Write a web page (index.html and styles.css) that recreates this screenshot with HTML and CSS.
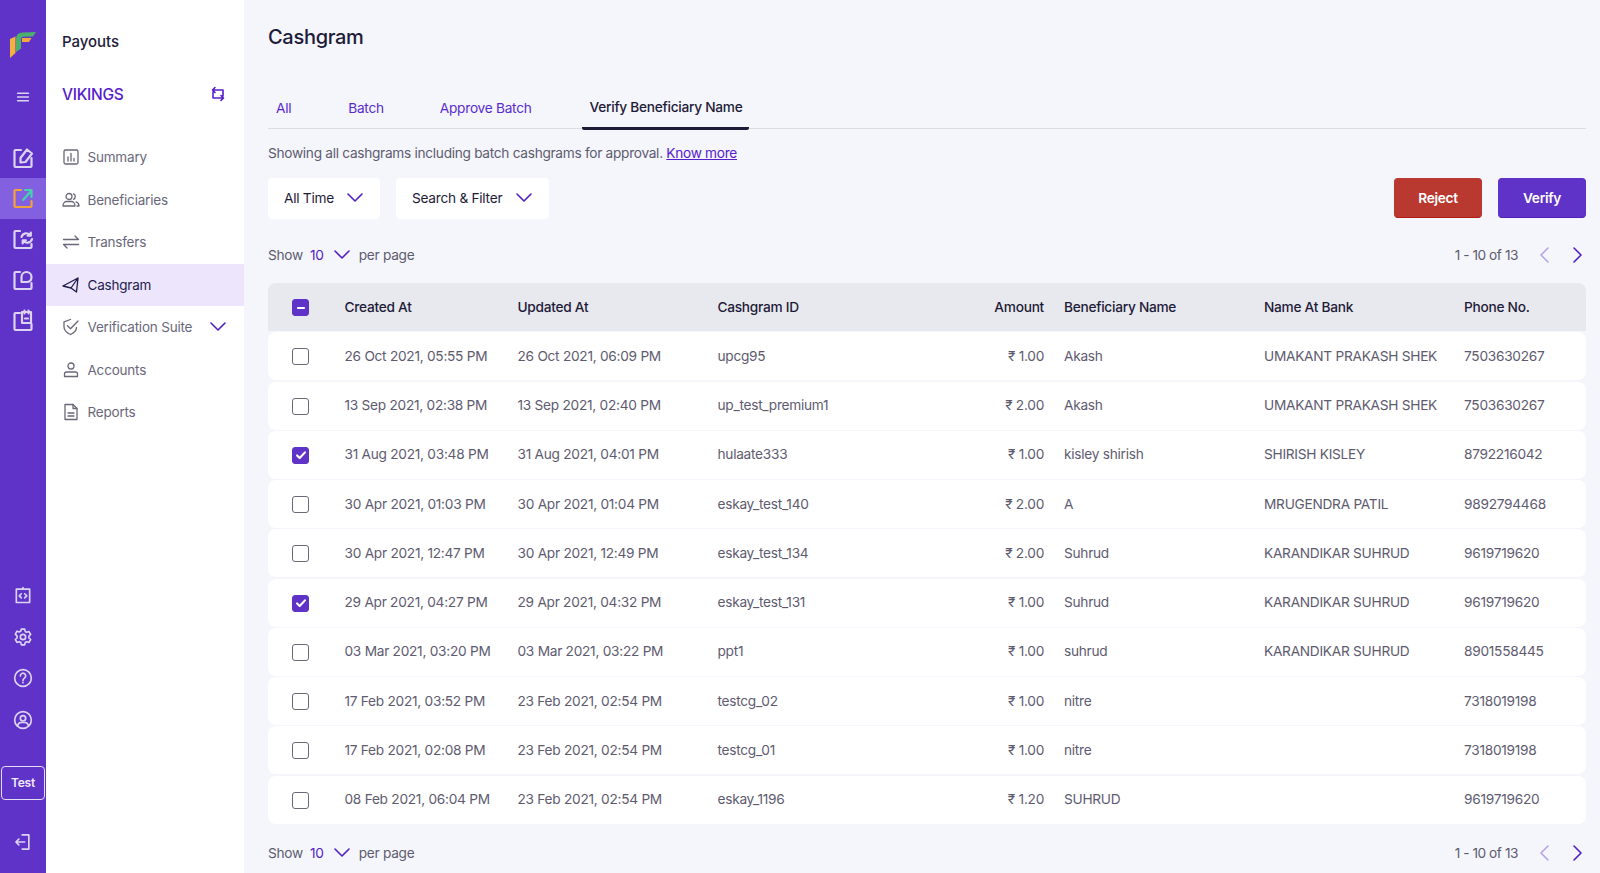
FILE: index.html
```html
<!DOCTYPE html>
<html lang="en">
<head>
<meta charset="utf-8">
<title>Cashgram</title>
<link rel="stylesheet" href="styles.css">
</head>
<body>
<div class="app">
  <nav class="rail">
    <svg class="logo" viewBox="0 0 26 26" width="26" height="26">
      <path d="M0 7L5.500 4.500V21L0 26Z" fill="#f5b13d"/>
      <path d="M6 7Q6 .5 12.500 .5L26 0L23 4.500L13 4.800Q11 5 11 7.500V16.500L6 20Z" fill="#4caf6e"/>
      <path d="M12 6H21.500L19 10H12Z" fill="#f5a63d"/>
    </svg>
    <button class="rail-btn burger" aria-label="Menu">
      <svg viewBox="0 0 24 24" width="20" height="20"><path d="M5.5 7.5h13M5.5 12h13M5.5 16.500h13"/></svg>
    </button>
    <div class="rail-group">
      <a class="rail-btn"><svg viewBox="0 0 24 24" width="26" height="26"><path d="M10 5H4.500a1 1 0 0 0-1 1v15a1 1 0 0 0 1 1h15a1 1 0 0 0 1-1v-8"/><path d="M9.500 13l6.500-8.500 5 4-6.500 8.500-5 .5z"/></svg></a>
      <a class="rail-btn active"><svg viewBox="0 0 24 24" width="26" height="26"><path class="o" d="M10 4H4.500a1 1 0 0 0-1 1v15a1 1 0 0 0 1 1h15a1 1 0 0 0 1-1v-5"/><path class="t" d="M14 4h6.500v7M20 5l-8 9"/></svg></a>
      <a class="rail-btn"><svg viewBox="0 0 24 24" width="26" height="26"><path d="M9 4H4.500a1 1 0 0 0-1 1v15a1 1 0 0 0 1 1h15a1 1 0 0 0 1-1v-3"/><path d="M10.500 10a5 5 0 0 1 9-1.500M21 12a5 5 0 0 1-9 1.500M19.800 5.500v3.200h-3.200M11.700 16.500v-3.200h3.200"/></svg></a>
      <a class="rail-btn"><svg viewBox="0 0 24 24" width="26" height="26"><path d="M9 4H4.500a1 1 0 0 0-1 1v15a1 1 0 0 0 1 1h15a1 1 0 0 0 1-1v-5"/><path d="M10.500 14V9a5 5 0 0 1 10 0c0 3-2 5-5 5z"/></svg></a>
      <a class="rail-btn"><svg viewBox="0 0 24 24" width="26" height="26"><path d="M9 4H4.500a1 1 0 0 0-1 1v15a1 1 0 0 0 1 1h15a1 1 0 0 0 1-1v-5"/><path d="M11 3h9v11h-9zM13.500 1.500v3M17.500 1.500v3"/><path d="M14 9.500h3"/></svg></a>
    </div>
    <div class="rail-bottom">
      <a class="rail-btn"><svg viewBox="0 0 24 24" width="20" height="20"><path d="M4 5h16v16H4zM12 5V3"/><path d="M10 10.500L7.500 13l2.500 2.500M14 10.500l2.500 2.500-2.500 2.500"/></svg></a>
      <a class="rail-btn"><svg viewBox="0 0 24 24" width="20" height="20"><circle cx="12" cy="12" r="3.200"/><path d="M10 2.500h4l.6 2.800 1.900 1.100 2.700-.9 2 3.500-2.100 1.900v2.200l2.100 1.900-2 3.500-2.700-.9-1.900 1.100-.6 2.800h-4l-.6-2.800-1.900-1.100-2.700.9-2-3.500 2.100-1.900v-2.200L2.800 8.500l2-3.500 2.700.9 1.900-1.100z"/></svg></a>
      <a class="rail-btn"><svg viewBox="0 0 24 24" width="20" height="20"><circle cx="12" cy="12" r="10"/><path d="M8.800 9.500a3.200 3.200 0 1 1 4.900 2.700c-1 .7-1.700 1.300-1.700 2.800M12 17.200v.6"/></svg></a>
      <a class="rail-btn"><svg viewBox="0 0 24 24" width="20" height="20"><circle cx="12" cy="12" r="10"/><circle cx="12" cy="10" r="3.200"/><path d="M5.500 19c.5-2.500 2.500-4 4-4h5c1.500 0 3.500 1.500 4 4"/></svg></a>
      <div class="env">Test</div>
      <a class="rail-btn exit"><svg viewBox="0 0 24 24" width="20" height="20"><path d="M11 3.500h8v17h-8"/><path d="M14 12H3.500M7 8.500L3.500 12 7 15.500"/></svg></a>
    </div>
  </nav>

  <aside class="side">
    <h2 class="side-title">Payouts</h2>
    <div class="merchant">
      <span>VIKINGS</span>
      <svg viewBox="0 0 16 16" width="16" height="16"><path d="M5 1.500L2.500 4 5 6.500M2.500 4H13v6M11 9.500l2.500 2.500-2.500 2.500M13.500 12H3V6"/></svg>
    </div>
    <ul class="menu">
      <li class="menu-item"><svg viewBox="0 0 18 18" width="18" height="18"><rect x="2" y="2" width="14" height="14" rx="1.500"/><path d="M6 13V9M9 13V5.500M12 13v-2.500"/></svg>Summary</li>
      <li class="menu-item"><svg viewBox="0 0 18 18" width="18" height="18"><circle cx="7" cy="5.500" r="3"/><path d="M1 15c0-3 2-4.500 3.500-4.500h5C11 10.500 13 12 13 15zM11.500 2.800a3 3 0 0 1 0 5.500M14 10.800c2 .5 3 2 3 4.200h-2"/></svg>Beneficiaries</li>
      <li class="menu-item"><svg viewBox="0 0 18 18" width="18" height="18"><path d="M1.500 6.500h15M13 3l3.500 3.500M16.500 11.500h-15M5 15l-3.500-3.500"/></svg>Transfers</li>
      <li class="menu-item current"><svg viewBox="0 0 18 18" width="18" height="18"><path d="M1 10L16 2l-1.500 14L9 12zM1 10l8 2M9 12l7-10"/></svg>Cashgram</li>
      <li class="menu-item"><svg viewBox="0 0 18 18" width="18" height="18"><path d="M8.500 1.500L2 3.800v5c0 3.700 3 6.200 6.500 7.700 3.500-1.500 6-4 6-7.200"/><path d="M5.500 7.800l3 3L16 3"/></svg>Verification Suite<svg class="chev menu-chev" viewBox="0 0 16 16" width="16" height="16"><path d="M1 4l7 7 7-7"/></svg></li>
      <li class="menu-item"><svg viewBox="0 0 18 18" width="18" height="18"><circle cx="9" cy="5" r="3"/><path d="M2.500 15.500v-2.500c0-1 1-2 2-2h9c1 0 2 1 2 2v2.500z"/></svg>Accounts</li>
      <li class="menu-item"><svg viewBox="0 0 18 18" width="18" height="18"><path d="M3 1.500h8l4 4v11H3z"/><path d="M11 1.500v4h4M6 10h6M6 13h6"/></svg>Reports</li>
    </ul>
  </aside>

  <main class="main">
    <h1 class="title">Cashgram</h1>
    <div class="tabs">
      <a class="tab t-all">All</a>
      <a class="tab t-batch">Batch</a>
      <a class="tab t-approve">Approve Batch</a>
      <a class="tab sel">Verify Beneficiary Name</a>
    </div>
    <p class="info">Showing all cashgrams including batch cashgrams for approval. <a class="know">Know more</a></p>
    <div class="toolbar">
      <div class="select s-time">All Time<svg class="chev" viewBox="0 0 16 16" width="16" height="16"><path d="M1 4l7 7 7-7"/></svg></div>
      <div class="select s-search">Search &amp; Filter<svg class="chev" viewBox="0 0 16 16" width="16" height="16"><path d="M1 4l7 7 7-7"/></svg></div>
      <div class="actions">
        <button class="btn reject">Reject</button>
        <button class="btn verify">Verify</button>
      </div>
    </div>
    <div class="pager">
      <span>Show</span><span class="num">10</span><svg class="chev" viewBox="0 0 16 16" width="16" height="16"><path d="M1 4l7 7 7-7"/></svg><span>per page</span>
      <span class="count">1 - 10 of 13</span>
      <svg class="arrow off" viewBox="0 0 12 16" width="12" height="16"><path d="M10 1L3 8l7 7"/></svg>
      <svg class="arrow" viewBox="0 0 12 16" width="12" height="16"><path d="M2 1l7 7-7 7"/></svg>
    </div>

    <div class="table">
      <div class="row head">
        <span class="cb on"><svg viewBox="0 0 16 16"><path d="M4.500 8h7"/></svg></span>
        <span>Created At</span><span>Updated At</span><span>Cashgram ID</span><span class="amt">Amount</span><span>Beneficiary Name</span><span>Name At Bank</span><span>Phone No.</span>
      </div>
      <div class="row"><span class="cb"></span><span>26 Oct 2021, 05:55 PM</span><span>26 Oct 2021, 06:09 PM</span><span>upcg95</span><span class="amt">₹ 1.00</span><span>Akash</span><span>UMAKANT PRAKASH SHEK</span><span>7503630267</span></div>
      <div class="row"><span class="cb"></span><span>13 Sep 2021, 02:38 PM</span><span>13 Sep 2021, 02:40 PM</span><span>up_test_premium1</span><span class="amt">₹ 2.00</span><span>Akash</span><span>UMAKANT PRAKASH SHEK</span><span>7503630267</span></div>
      <div class="row"><span class="cb on"><svg viewBox="0 0 16 16"><path d="M3.500 8.500l3 3 6-6.500"/></svg></span><span>31 Aug 2021, 03:48 PM</span><span>31 Aug 2021, 04:01 PM</span><span>hulaate333</span><span class="amt">₹ 1.00</span><span>kisley shirish</span><span>SHIRISH KISLEY</span><span>8792216042</span></div>
      <div class="row"><span class="cb"></span><span>30 Apr 2021, 01:03 PM</span><span>30 Apr 2021, 01:04 PM</span><span>eskay_test_140</span><span class="amt">₹ 2.00</span><span>A</span><span>MRUGENDRA PATIL</span><span>9892794468</span></div>
      <div class="row"><span class="cb"></span><span>30 Apr 2021, 12:47 PM</span><span>30 Apr 2021, 12:49 PM</span><span>eskay_test_134</span><span class="amt">₹ 2.00</span><span>Suhrud</span><span>KARANDIKAR SUHRUD</span><span>9619719620</span></div>
      <div class="row"><span class="cb on"><svg viewBox="0 0 16 16"><path d="M3.500 8.500l3 3 6-6.500"/></svg></span><span>29 Apr 2021, 04:27 PM</span><span>29 Apr 2021, 04:32 PM</span><span>eskay_test_131</span><span class="amt">₹ 1.00</span><span>Suhrud</span><span>KARANDIKAR SUHRUD</span><span>9619719620</span></div>
      <div class="row"><span class="cb"></span><span>03 Mar 2021, 03:20 PM</span><span>03 Mar 2021, 03:22 PM</span><span>ppt1</span><span class="amt">₹ 1.00</span><span>suhrud</span><span>KARANDIKAR SUHRUD</span><span>8901558445</span></div>
      <div class="row"><span class="cb"></span><span>17 Feb 2021, 03:52 PM</span><span>23 Feb 2021, 02:54 PM</span><span>testcg_02</span><span class="amt">₹ 1.00</span><span>nitre</span><span></span><span>7318019198</span></div>
      <div class="row"><span class="cb"></span><span>17 Feb 2021, 02:08 PM</span><span>23 Feb 2021, 02:54 PM</span><span>testcg_01</span><span class="amt">₹ 1.00</span><span>nitre</span><span></span><span>7318019198</span></div>
      <div class="row"><span class="cb"></span><span>08 Feb 2021, 06:04 PM</span><span>23 Feb 2021, 02:54 PM</span><span>eskay_1196</span><span class="amt">₹ 1.20</span><span>SUHRUD</span><span></span><span>9619719620</span></div>
    </div>

    <div class="pager bottom">
      <span>Show</span><span class="num">10</span><svg class="chev" viewBox="0 0 16 16" width="16" height="16"><path d="M1 4l7 7 7-7"/></svg><span>per page</span>
      <span class="count">1 - 10 of 13</span>
      <svg class="arrow off" viewBox="0 0 12 16" width="12" height="16"><path d="M10 1L3 8l7 7"/></svg>
      <svg class="arrow" viewBox="0 0 12 16" width="12" height="16"><path d="M2 1l7 7-7 7"/></svg>
    </div>
  </main>
</div>
</body>
</html>
```
FILE: styles.css
```css
* { box-sizing: border-box; }
html, body { margin: 0; height: 873px; overflow: hidden; }
body { font-family: "Inter", "Liberation Sans", sans-serif; font-size: 13.700px; color: #5e5b6f; background: #f4f6fb; letter-spacing: -0.27px; }
h1, h2, p, ul { margin: 0; padding: 0; }
svg { fill: none; stroke: currentColor; stroke-width: 2; stroke-linecap: round; stroke-linejoin: round; flex: none; }
.app { display: flex; height: 873px; }

.rail { width: 46px; flex: none; background: #5f32c8; color: #dcd3f3; display: flex; flex-direction: column; align-items: center; position: relative; }
.rail svg { stroke-width: 2; }
.logo { margin-top: 32px; stroke: none; }
.rail-btn { width: 46px; height: 41.500px; display: flex; align-items: center; justify-content: center; background: none; border: 0; padding: 0; color: inherit; }
.burger { margin-top: 18px; }
.burger svg { stroke-width: 1.800; }
.rail-group { margin-top: 19px; }
.rail-group .rail-btn { height: 41px; }
.rail-group svg { width: 24px; height: 24px; stroke-width: 2.200; }
.rail-btn.active { background: #8360e0; }
.rail-btn .o { stroke: #f2a23c; }
.rail-btn .t { stroke: #45d0b0; }
.rail-bottom { margin-top: auto; display: flex; flex-direction: column; align-items: center; padding-bottom: 10px; }
.env { width: 44px; height: 34px; margin: 25px 0 0; border: 1.500px solid #e4ddf6; border-radius: 4px; display: flex; align-items: center; justify-content: center; color: #efeafb; font-size: 12px; font-weight: 600; }
.exit { margin-top: 22px; }

.side { width: 198px; flex: none; background: #fff; padding-top: 31px; }
.side-title { font-size: 15px; font-weight: 500; color: #1e1b39; padding-left: 16px; line-height: 22px; letter-spacing: -0.05px; }
.merchant { display: flex; align-items: center; justify-content: space-between; margin-top: 29px; padding: 0 18px 0 16px; height: 24px; color: #5520cc; font-size: 15.500px; font-weight: 500; }
.merchant svg { stroke-width: 1.600; }
.menu { list-style: none; margin-top: 30px; }
.menu-item { display: flex; align-items: center; gap: 7.500px; height: 42.500px; padding-left: 16px; font-size: 13.500px; color: #6a677a; letter-spacing: -0.2px; }
.menu-item > svg:first-child { stroke-width: 1.300; }
.menu-item.current { background: #ece5fb; color: #1e1b4b; }
.menu-chev { margin-left: auto; margin-right: 18px; }

.chev { color: #4f1fc4; stroke-width: 1.600; }
.main { flex: 1; min-width: 0; padding: 0 14px 0 24px; }
.title { font-size: 20px; font-weight: 500; color: #1e1b39; line-height: 28px; padding-top: 23px; height: 51px; letter-spacing: -0.3px; }
.tabs { display: flex; margin-top: 40px; height: 38px; border-bottom: 1.500px solid #dcdde4; position: relative; }
.tab { color: #5a2bd0; padding-top: 9px; }
.t-all { margin-left: 8px; }
.t-batch { margin-left: 57px; }
.t-approve { margin-left: 56px; }
.tab.sel { margin-left: 50px; padding: 8px 8px 0; width: 167px; color: #1e1b39; font-weight: 500; border-bottom: 3px solid #1e1b39; height: 38.500px; border-radius: 0 0 2px 2px; white-space: nowrap; }
.info { margin-top: 14px; line-height: 20px; letter-spacing: -0.3px; }
.know { color: #5520cc; text-decoration: underline; }
.toolbar { display: flex; gap: 16px; margin-top: 15px; align-items: flex-start; }
.select { height: 41px; background: #fff; border-radius: 4px; display: flex; align-items: center; justify-content: space-between; padding: 0 17px 1px 16px; color: #1e1b39; }
.s-time { width: 112px; }
.s-search { width: 153px; }
.actions { margin-left: auto; display: flex; gap: 16px; }
.btn { width: 88px; height: 40px; padding-bottom: 2px; border-radius: 4px; color: #fff; font: 600 13.700px "Inter", "Liberation Sans", sans-serif; letter-spacing: -0.27px; border: 1px solid; }
.reject { background: #b93830; border-color: #b93830 #b93830 #b41a12; }
.verify { background: #5f32c8; border-color: #5f32c8 #5f32c8 #4f20bd; }
.pager { display: flex; align-items: center; height: 24px; margin-top: 24px; }
.pager .num { color: #5520cc; margin-left: 7px; }
.pager .chev { margin: 0 9px 0 10px; }
.count { margin-left: auto; margin-right: 20px; letter-spacing: -0.45px; }
.arrow { color: #4f1fc4; stroke-width: 1.600; }
.arrow.off { color: #b7a3ea; margin-right: 22px; }
.arrow:last-child { margin-right: 2px; }

.table { display: flex; flex-direction: column; gap: 1.250px; margin-top: 16px; }
.row { display: grid; grid-template-columns: 76.500px 173px 200px 200px 126.500px 220px 200px 1fr; align-items: center; height: 48px; padding-bottom: 1px; background: #fff; border-radius: 8px; white-space: nowrap; }
.row > span:nth-child(6) { padding-left: 20px; }
.row > .cb { margin: 2px 0 0 24px; }
.head { background: #e8e9ee; color: #1e1b39; font-weight: 500; border-radius: 8px 8px 0 0; }
.amt { text-align: right; }
.cb { width: 17px; height: 17px; border: 1.300px solid #6a677a; border-radius: 3px; background: #fff; display: flex; align-items: center; justify-content: center; }
.cb.on { background: #5f32c8; border-color: #5f32c8; color: #fff; }
.cb svg { width: 14px; height: 14px; stroke-width: 2.400; }
.pager.bottom { margin-top: 17px; }
```
